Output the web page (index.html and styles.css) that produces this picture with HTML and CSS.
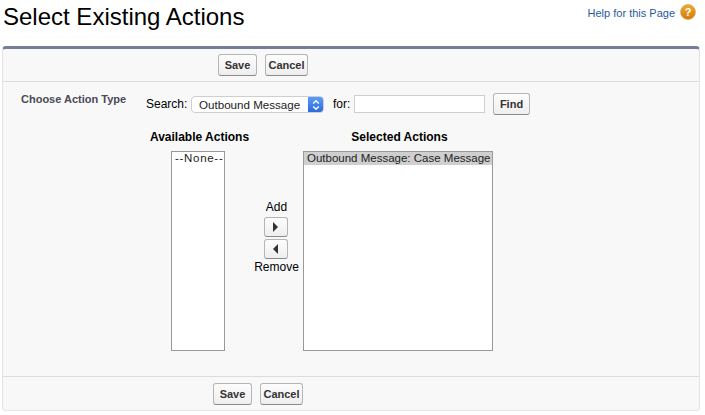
FILE: index.html
```html
<!DOCTYPE html>
<html lang="en">
<head>
<meta charset="utf-8">
<title>Select Existing Actions</title>
<link rel="stylesheet" href="styles.css">
</head>
<body>
<header class="page-head">
  <h1 class="title">Select Existing Actions</h1>
  <a class="help" href="#"><span class="help-text">Help for this Page</span>
    <svg class="help-icon" width="16" height="16" viewBox="0 0 16 16">
      <defs><linearGradient id="hg" x1="0" y1="0" x2="0" y2="1"><stop offset="0" stop-color="#f0a92c"/><stop offset="1" stop-color="#d47c0c"/></linearGradient></defs>
      <circle cx="8" cy="8" r="7.5" fill="url(#hg)" stroke="#c9a35a" stroke-width="0.6"/>
      <text x="8" y="12" text-anchor="middle" class="help-mark">?</text>
    </svg>
  </a>
</header>
<main class="panel">
  <div class="bar bar-top">
    <button class="btn btn-save">Save</button>
    <button class="btn btn-cancel">Cancel</button>
  </div>
  <div class="body">
    <div class="search-row">
      <span class="type-label">Choose Action Type</span>
      <span class="search-label">Search:</span>
      <div class="select"><span class="select-text">Outbound Message</span>
        <span class="select-arrows">
          <svg width="8" height="12" viewBox="0 0 8 12"><path d="M1.2 4.6 4 1.8 6.8 4.6M1.2 7.4 4 10.2 6.8 7.4" fill="none" stroke="#fff" stroke-width="1.4"/></svg>
        </span>
      </div>
      <span class="for-label">for:</span>
      <input class="search-input" type="text">
      <button class="btn btn-find">Find</button>
    </div>
    <div class="duel">
      <div class="col col-avail">
        <div class="col-title">Available Actions</div>
        <div class="list list-avail"><div class="opt opt-none">--None--</div></div>
      </div>
      <div class="mover">
        <span class="mover-label mover-add">Add</span>
        <button class="arrow-btn"><svg width="7" height="10" viewBox="0 0 7 10"><path d="M1 0 6 5 1 10z" fill="#333"/></svg></button>
        <button class="arrow-btn"><svg width="7" height="10" viewBox="0 0 7 10"><path d="M6 0 1 5 6 10z" fill="#333"/></svg></button>
        <span class="mover-label mover-remove">Remove</span>
      </div>
      <div class="col col-sel">
        <div class="col-title">Selected Actions</div>
        <div class="list list-sel"><div class="opt opt-on">Outbound Message: Case Message</div></div>
      </div>
    </div>
  </div>
  <div class="bar bar-bottom">
    <button class="btn btn-save">Save</button>
    <button class="btn btn-cancel">Cancel</button>
  </div>
</main>
</body>
</html>
```
FILE: styles.css
```css
* { box-sizing: border-box; }
html, body { margin: 0; padding: 0; }
body {
  width: 705px;
  height: 415px;
  overflow: hidden;
  background: #fff;
  color: #000;
  font-family: "Liberation Sans", Arial, sans-serif;
  font-size: 12px;
}
.page-head {
  display: flex;
  justify-content: space-between;
  height: 46px;
  padding: 0 9px 0 3px;
}
.title {
  margin: 3px 0 0;
  font-size: 24px;
  line-height: 28px;
  font-weight: 400;
}
.help {
  display: flex;
  align-items: flex-start;
  gap: 5px;
  padding-top: 4px;
  color: #1f5a9e;
  font-size: 11px;
  line-height: 16px;
  text-decoration: none;
}
.help-text { padding-top: 1px; }
.help-mark { font: 700 11px "Liberation Sans", sans-serif; fill: #fff; }
.panel {
  display: flex;
  flex-direction: column;
  width: 698px;
  height: 365px;
  margin-left: 2px;
  background: #f8f8f8;
  border: 1px solid #e4e4e4;
  border-top: 3px solid #747e96;
  border-radius: 4px;
}
.bar { display: flex; align-items: flex-start; gap: 8px; }
.bar-top {
  height: 33px;
  padding: 5px 0 0 215px;
  border-bottom: 1px solid #dcdcdc;
}
.bar-bottom {
  height: 34px;
  padding: 6px 0 0 210px;
  border-top: 1px solid #dcdcdc;
}
.btn {
  height: 22px;
  padding: 0;
  border: 1px solid #b5b5b5;
  border-bottom-color: #8a8a8a;
  border-radius: 3px;
  background: linear-gradient(#fdfdfd, #eeeeee);
  color: #333;
  font: 700 11px "Liberation Sans", Arial, sans-serif;
}
.btn-save { width: 39px; }
.btn-cancel { width: 43px; }
.body { flex: 1; padding-top: 13px; }
.search-row { display: flex; align-items: flex-start; }
.type-label {
  width: 125px;
  margin: -2px 0 0 18px;
  color: #4a4a56;
  font-size: 11px;
  font-weight: 700;
  line-height: 12px;
}
.search-label { width: 45px; line-height: 18px; }
.select {
  display: flex;
  justify-content: space-between;
  width: 133px;
  height: 17px;
  margin-top: 1px;
  background: #fff;
  border: 1px solid #cfcfcf;
  border-radius: 4px;
  overflow: hidden;
}
.select-text { padding-left: 7px; font-size: 11.6px; line-height: 15px; color: #222; }
.select-arrows {
  display: flex;
  align-items: center;
  justify-content: center;
  width: 15px;
  background: linear-gradient(#5a9cf5, #2a6be0);
}
.for-label { width: 21px; margin-left: 9px; line-height: 18px; }
.search-input {
  width: 131px;
  height: 18px;
  padding: 0;
  background: #fff;
  border: 1px solid #cfcfcf;
}
.btn-find { width: 37px; margin: -2px 0 0 8px; }
.duel { display: flex; align-items: flex-start; margin-top: 15px; }
.col { display: flex; flex-direction: column; align-items: center; }
.col-avail { width: 100px; margin-left: 145px; }
.col-sel { width: 190px; }
.col-title { padding-left: 3px; font-weight: 700; line-height: 14px; white-space: nowrap; }
.list {
  height: 200px;
  margin-top: 7px;
  background: #fff;
  border: 1px solid #999;
}
.list-avail { width: 54px; }
.list-sel { width: 190px; }
.opt { padding: 0 3px; font-size: 11.5px; line-height: 13px; color: #222; white-space: nowrap; }
.opt-none { padding: 0 2px 0 3px; letter-spacing: 0.7px; }
.opt-on { background: #cfcfcf; }
.mover {
  display: flex;
  flex-direction: column;
  align-items: center;
  width: 55px;
  padding-top: 70px;
  gap: 2px;
}
.mover-label { padding-left: 2px; line-height: 14px; }
.mover-add { margin-bottom: 1px; }
.mover-remove { margin-top: -1px; }
.arrow-btn {
  display: flex;
  align-items: center;
  justify-content: center;
  width: 24px;
  height: 20px;
  padding: 0;
  border: 1px solid #b5b5b5;
  border-bottom-color: #8a8a8a;
  border-radius: 3px;
  background: linear-gradient(#fdfdfd, #eeeeee);
}
```
